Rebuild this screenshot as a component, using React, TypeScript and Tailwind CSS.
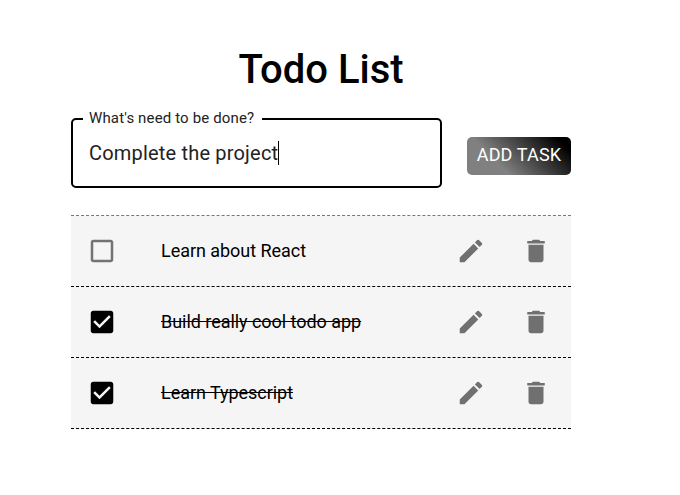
import React from "react";

const tasks = [
  { text: "Learn about React", done: false },
  { text: "Build really cool todo app", done: true },
  { text: "Learn Typescript", done: true },
];

const icons = {
  empty: "M19 5v14H5V5h14m0-2H5c-1.1 0-2 .9-2 2v14c0 1.1.9 2 2 2h14c1.1 0 2-.9 2-2V5c0-1.1-.9-2-2-2z",
  checked: "M19 3H5c-1.11 0-2 .9-2 2v14c0 1.1.89 2 2 2h14c1.11 0 2-.9 2-2V5c0-1.1-.89-2-2-2zm-9 14l-5-5 1.41-1.41L10 14.17l7.59-7.59L19 8l-9 9z",
  edit: "M3 17.25V21h3.75L17.81 9.94l-3.75-3.75L3 17.25zM20.71 7.04c.39-.39.39-1.02 0-1.41l-2.34-2.34a.9959.9959 0 0 0-1.41 0l-1.83 1.83 3.75 3.75 1.83-1.83z",
  trash: "M6 19c0 1.1.9 2 2 2h8c1.1 0 2-.9 2-2V7H6v12zM19 4h-3.5l-1-1h-5l-1 1H5v2h14V4z",
};

function Icon({ name, className }: { name: keyof typeof icons; className: string }) {
  return (
    <svg viewBox="0 0 24 24" fill="currentColor" className={className}>
      <path d={icons[name]} />
    </svg>
  );
}

export default function App() {
  return (
    <main className="h-[495px] w-[680px] bg-white pl-[71px] pt-[46px] font-['Roboto',sans-serif] text-black">
      <div className="w-[500px]">
        <h1 className="text-center text-[40px] font-medium leading-[48px]">Todo List</h1>
        <form className="mt-[17px] flex h-[77px] items-start">
          <fieldset className="h-[77px] w-[371px] rounded-[5px] border-2 border-black pl-[10px]">
            <legend className="h-[15px] pl-[6px] pr-[8px] text-[15px] leading-[15px] tracking-[0.00938em] text-[#222]">What's need to be done?</legend>
            <div className="mt-[15px] flex items-center pl-[6px] text-[20px] leading-[24px] tracking-[0.00938em] text-[#222]">
              Complete the project<span className="h-6 w-px bg-black" />
            </div>
          </fieldset>
          <button type="button" className="ml-[25px] mt-[26px] h-[38px] w-[104px] whitespace-nowrap rounded-[5px] bg-linear-45/srgb from-[#808080] from-30% to-black to-90% pb-[4px] text-[18px] tracking-[0.15px] text-white">ADD TASK</button>
        </form>
        <ul className="mt-[27px] border-t border-dashed border-[#777]">
          {tasks.map((t) => (
            <li key={t.text} className="flex h-[71px] items-center border-b border-dashed border-black bg-[#f5f5f5] pl-[16px]">
              <Icon name={t.done ? "checked" : "empty"} className={t.done ? "size-[30px]" : "size-[30px] text-[#737373]"} />
              <span className={t.done ? "mb-[2px] ml-[44px] w-[295px] text-[18px] tracking-[-0.04px] line-through" : "mb-[2px] ml-[44px] w-[295px] text-[18px] tracking-[-0.04px]"}>{t.text}</span>
              <Icon name="edit" className="size-[30px] text-[#707070]" />
              <Icon name="trash" className="ml-[35px] size-[30px] text-[#707070]" />
            </li>
          ))}
        </ul>
      </div>
    </main>
  );
}
